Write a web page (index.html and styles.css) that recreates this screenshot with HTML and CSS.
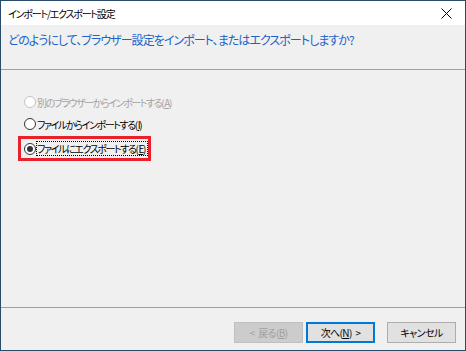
FILE: index.html
```html
<!DOCTYPE html>
<html lang="ja">
<head>
    <meta charset="UTF-8">
    <title>インポート/エクスポート設定</title>
    <link rel="stylesheet" href="styles.css">
</head>
<body>
    <div class="window">
        <div class="titlebar">
            <span class="title">インポート/エクスポート設定</span>
            <svg class="close" viewBox="0 0 11 11" width="11" height="11">
                <path d="M0.5 0.5 L10.5 10.5 M10.5 0.5 L0.5 10.5" stroke="#000" stroke-width="1" fill="none"/>
            </svg>
        </div>

        <div class="header">どのようにして、ブラウザー設定をインポート、またはエクスポートしますか?</div>

        <div class="content">
            <div class="option disabled">
                <span class="radio"></span>
                <span class="label">別のブラウザーからインポートする(<u>A</u>)</span>
            </div>
            <div class="option">
                <span class="radio"></span>
                <span class="label">ファイルからインポートする(<u>I</u>)</span>
            </div>
            <div class="option highlight">
                <span class="radio checked"></span>
                <span class="label focus">ファイルにエクスポートする(<u>E</u>)</span>
            </div>
        </div>

        <div class="footer">
            <button class="btn" disabled>&lt; 戻る(<u>B</u>)</button>
            <button class="btn default">次へ(<u>N</u>) &gt;</button>
            <button class="btn cancel">キャンセル</button>
        </div>
    </div>
</body>
</html>
```

FILE: styles.css
```css
* {
    margin: 0;
    padding: 0;
    box-sizing: border-box;
}

body {
    font-family: "Noto Sans CJK JP", "Noto Sans", sans-serif;
    font-feature-settings: "palt" 1;
    background: #f0f0f0;
}

.window {
    width: 466px;
    height: 351px;
    border: 1px solid #2a4a69;
    background: #f0f0f0;
    display: flex;
    flex-direction: column;
}

.titlebar {
    height: 24px;
    background: #fff;
    display: flex;
    align-items: center;
    justify-content: space-between;
    padding: 0 13px 0 7px;
    font-size: 10px;
    letter-spacing: -1.2px;
    color: #000;
}

.close {
    display: block;
}

.header {
    height: 45px;
    padding: 6px 0 0 7px;
    font-size: 12px;
    letter-spacing: -0.95px;
    line-height: 18px;
    color: #1c62c9;
    border-bottom: 1px solid #a0a0a0;
}

.content {
    flex: 1;
    padding-top: 21px;
    border-bottom: 1px solid #a0a0a0;
    display: flex;
    flex-direction: column;
    align-items: flex-start;
}

.option {
    height: 22px;
    display: flex;
    align-items: center;
    padding-left: 23px;
    font-size: 10px;
    letter-spacing: -1.4px;
    color: #000;
}

.option.disabled {
    color: #a3a3a3;
}

.option.highlight {
    height: 25px;
    margin: 1px 0 0 17px;
    padding: 0 1px 0 3px;
    border: 3px solid #e8212b;
}

.radio {
    width: 12px;
    height: 12px;
    border: 1px solid #333;
    border-radius: 50%;
    background: #fff;
    margin-right: 1px;
    display: flex;
    align-items: center;
    justify-content: center;
    flex-shrink: 0;
}

.disabled .radio {
    border-color: #c4c4c4;
}

.radio.checked::after {
    content: "";
    width: 6px;
    height: 6px;
    border-radius: 50%;
    background: #333;
}

.label {
    line-height: 13px;
    padding-right: 2px;
    white-space: nowrap;
}

.label u {
    margin-left: 1px;
}

.label.focus {
    outline: 1px dotted #000;
}

.footer {
    height: 42px;
    display: flex;
    justify-content: flex-end;
    align-items: flex-start;
    padding: 14px 9px 0 0;
}

.btn {
    width: 69px;
    height: 21px;
    font-family: inherit;
    font-feature-settings: "palt" 1;
    font-size: 10px;
    letter-spacing: -0.6px;
    word-spacing: 2px;
    color: #000;
    background: #e1e1e1;
    border: 1px solid #adadad;
}

.btn + .btn {
    margin-left: 3px;
}

.btn:disabled {
    background: #cccccc;
    border-color: #bfbfbf;
    color: #a0a0a0;
}

.btn.default {
    border: 2px solid #0078d7;
}

.btn.cancel {
    margin-left: 12px;
}
```
